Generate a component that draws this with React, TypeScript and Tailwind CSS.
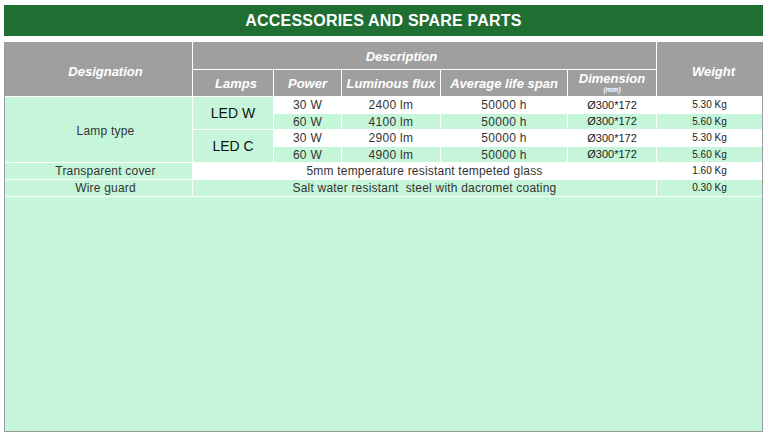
import React from "react";

const G = "bg-[#c6f6da]";
const W = "bg-white";
const H = "bg-[#9f9f9f] text-white font-bold italic text-[13px] flex items-center justify-center leading-none";
const C = "flex items-center justify-center text-[12px] tracking-[0.2px] text-[#333] leading-none";
const N = "flex items-center justify-center text-[12px] tracking-[0.3px] text-[#333] leading-none";
const D = "flex items-center justify-center text-[11px] text-[#222] leading-none";
const K = "flex items-center justify-center text-[10px] text-[#222] leading-none";

type Row = { p: string; f: string; l: string; d: string; w: string; bg: string };

const rows: Row[] = [
  { p: "30 W", f: "2400 lm", l: "50000 h", d: "Ø300*172", w: "5.30 Kg", bg: W },
  { p: "60 W", f: "4100 lm", l: "50000 h", d: "Ø300*172", w: "5.60 Kg", bg: G },
  { p: "30 W", f: "2900 lm", l: "50000 h", d: "Ø300*172", w: "5.30 Kg", bg: W },
  { p: "60 W", f: "4900 lm", l: "50000 h", d: "Ø300*172", w: "5.60 Kg", bg: G },
];

const rowStart = ["row-start-3", "row-start-4", "row-start-5", "row-start-6"];

export default function App() {
  return (
    <div
      className="w-[767px] h-[438px] bg-white pt-[5px] px-[4px]"
      style={{ fontFamily: '"Liberation Sans", Arial, sans-serif' }}
    >
      <div className="h-[31px] bg-[#1f6e32] flex items-center justify-center text-white font-bold text-[16px] tracking-[0.2px]">
        ACCESSORIES AND SPARE PARTS
      </div>
      <div className="mt-[6px] h-[390px] w-[759px] bg-white border-x border-b border-[#9a9a9a] grid gap-px grid-cols-[187px_80px_67px_98px_126px_88px_1fr] grid-rows-[27px_26px_16px_15px_16px_15px_16px_16px_1fr]">
        <div className={`${H} col-start-1 row-start-1 row-span-2 pl-[14px] pt-[4px]`}>Designation</div>
        <div className={`${H} col-start-2 col-span-5 row-start-1 pr-[46px] pt-[1px]`}>Description</div>
        <div className={`${H} col-start-7 row-start-1 row-span-2 pl-[8px] pt-[4px]`}>Weight</div>
        <div className={`${H} col-start-2 row-start-2 pl-[6px]`}>Lamps</div>
        <div className={`${H} col-start-3 row-start-2`}>Power</div>
        <div className={`${H} col-start-4 row-start-2`}>Luminous flux</div>
        <div className={`${H} col-start-5 row-start-2`}>Average life span</div>
        <div className={`${H} col-start-6 row-start-2 flex-col`}>
          <span className="text-[13px] leading-[12px]">Dimension</span>
          <span className="text-[7px] leading-[7px] mt-px">(mm)</span>
        </div>

        <div className={`${G} ${C} col-start-1 row-start-3 row-span-4 pl-[14px] pt-[2px]`}>Lamp type</div>
        <div className={`${G} flex items-center justify-center text-[14px] text-[#111] col-start-2 row-start-3 row-span-2`}>LED W</div>
        <div className={`${G} flex items-center justify-center text-[14px] text-[#111] col-start-2 row-start-5 row-span-2`}>LED C</div>

        {rows.map((r, i) => (
          <React.Fragment key={i}>
            <div className={`${r.bg} ${N} col-start-3 ${rowStart[i]}`}>{r.p}</div>
            <div className={`${r.bg} ${N} col-start-4 ${rowStart[i]}`}>{r.f}</div>
            <div className={`${r.bg} ${N} col-start-5 ${rowStart[i]}`}>{r.l}</div>
            <div className={`${r.bg} ${D} col-start-6 ${rowStart[i]}`}>{r.d}</div>
            <div className={`${r.bg} ${K} col-start-7 ${rowStart[i]}`}>{r.w}</div>
          </React.Fragment>
        ))}

        <div className={`${G} ${C} col-start-1 row-start-7 pl-[14px]`}>Transparent cover</div>
        <div className={`${W} ${C} col-start-2 col-span-5 row-start-7`}>5mm temperature resistant tempeted glass</div>
        <div className={`${W} ${K} col-start-7 row-start-7`}>1.60 Kg</div>

        <div className={`${G} ${C} col-start-1 row-start-8 pl-[14px]`}>Wire guard</div>
        <div className={`${G} ${C} col-start-2 col-span-5 row-start-8 whitespace-pre`}>Salt water resistant  steel with dacromet coating</div>
        <div className={`${G} ${K} col-start-7 row-start-8`}>0.30 Kg</div>

        <div className={`${G} col-start-1 col-span-7 row-start-9`} />
      </div>
    </div>
  );
}
